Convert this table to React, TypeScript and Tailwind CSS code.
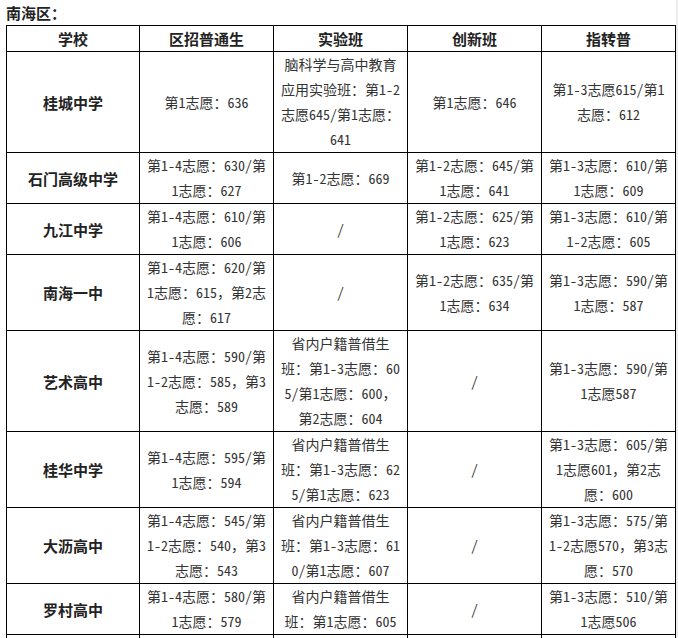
import React from "react";

type Row = { school: string; cells: string[][] };

const rows: Row[] = [
  {
    school: "桂城中学",
    cells: [
      ["第1志愿：636"],
      ["脑科学与高中教育", "应用实验班：第1-2", "志愿645/第1志愿：", "641"],
      ["第1志愿：646"],
      ["第1-3志愿615/第1", "志愿：612"],
    ],
  },
  {
    school: "石门高级中学",
    cells: [
      ["第1-4志愿：630/第", "1志愿：627"],
      ["第1-2志愿：669"],
      ["第1-2志愿：645/第", "1志愿：641"],
      ["第1-3志愿：610/第", "1志愿：609"],
    ],
  },
  {
    school: "九江中学",
    cells: [
      ["第1-4志愿：610/第", "1志愿：606"],
      ["/"],
      ["第1-2志愿：625/第", "1志愿：623"],
      ["第1-3志愿：610/第", "1-2志愿：605"],
    ],
  },
  {
    school: "南海一中",
    cells: [
      ["第1-4志愿：620/第", "1志愿：615，第2志", "愿：617"],
      ["/"],
      ["第1-2志愿：635/第", "1志愿：634"],
      ["第1-3志愿：590/第", "1志愿：587"],
    ],
  },
  {
    school: "艺术高中",
    cells: [
      ["第1-4志愿：590/第", "1-2志愿：585，第3", "志愿：589"],
      ["省内户籍普借生", "班：第1-3志愿：60", "5/第1志愿：600，", "第2志愿：604"],
      ["/"],
      ["第1-3志愿：590/第", "1志愿587"],
    ],
  },
  {
    school: "桂华中学",
    cells: [
      ["第1-4志愿：595/第", "1志愿：594"],
      ["省内户籍普借生", "班：第1-3志愿：62", "5/第1志愿：623"],
      ["/"],
      ["第1-3志愿：605/第", "1志愿601，第2志", "愿：600"],
    ],
  },
  {
    school: "大沥高中",
    cells: [
      ["第1-4志愿：545/第", "1-2志愿：540，第3", "志愿：543"],
      ["省内户籍普借生", "班：第1-3志愿：61", "0/第1志愿：607"],
      ["/"],
      ["第1-3志愿：575/第", "1-2志愿570，第3志", "愿：570"],
    ],
  },
  {
    school: "罗村高中",
    cells: [
      ["第1-4志愿：580/第", "1志愿：579"],
      ["省内户籍普借生", "班：第1志愿：605"],
      ["/"],
      ["第1-3志愿：510/第", "1志愿506"],
    ],
  },
];

const headers = ["学校", "区招普通生", "实验班", "创新班", "指转普"];

export default function App() {
  return (
    <div className="w-[678px] min-h-[638px] bg-white border-r-2 border-[#ececec] font-['Noto_Sans_Mono_CJK_SC','Noto_Sans_CJK_SC',sans-serif] text-[#333]">
      <div className="pl-[6px] h-[25px] text-[15px] leading-[25px] font-bold text-[#222]">
        南海区：
      </div>
      <table className="ml-[6px] w-[670px] table-fixed border-collapse text-center">
        <colgroup>
          <col className="w-[133px]" />
          <col className="w-[134px]" />
          <col className="w-[134px]" />
          <col className="w-[134px]" />
          <col className="w-[134px]" />
        </colgroup>
        <thead>
          <tr>
            {headers.map((h) => (
              <th
                key={h}
                className="border border-black p-0 h-[26px] text-[15px] leading-[25px] font-bold text-[#222]"
              >
                {h}
              </th>
            ))}
          </tr>
        </thead>
        <tbody>
          {rows.map((r) => (
            <tr key={r.school}>
              <td className="border border-black p-0 text-[15px] leading-[25px] font-bold text-[#222] align-middle">
                {r.school}
              </td>
              {r.cells.map((lines, i) => (
                <td
                  key={i}
                  className="border border-black p-0 text-[14px] leading-[25px] align-middle whitespace-nowrap"
                >
                  {lines.map((l, j) => (
                    <div key={j}>{l}</div>
                  ))}
                </td>
              ))}
            </tr>
          ))}
          <tr>
            <td className="border border-black p-0 h-[50px]"></td>
            <td className="border border-black p-0"></td>
            <td className="border border-black p-0"></td>
            <td className="border border-black p-0"></td>
            <td className="border border-black p-0"></td>
          </tr>
        </tbody>
      </table>
    </div>
  );
}
